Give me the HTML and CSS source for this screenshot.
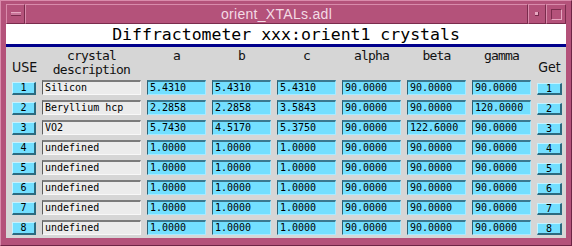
FILE: index.html
```
<!DOCTYPE html>
<html lang="en">
<head>
    <meta charset="UTF-8">
    <title>orient_XTALs.adl</title>
    <link rel="stylesheet" href="styles.css">
</head>
<body>

    <div class="frame">
        <!-- Window title bar -->
        <div class="titlebar">
            <div class="menu-btn"><span class="bar"></span></div>
            <div class="title">orient_XTALs.adl</div>
            <div class="min-btn"><span class="dot"></span></div>
            <div class="max-btn"><span class="square"></span></div>
        </div>

        <div class="screen">
            <div class="heading">Diffractometer xxx:orient1 crystals</div>

            <div class="panel">
                <!-- Column labels -->
                <div class="label side">USE</div>
                <div class="label">crystal<br>description</div>
                <div class="label">a</div>
                <div class="label">b</div>
                <div class="label">c</div>
                <div class="label">alpha</div>
                <div class="label">beta</div>
                <div class="label">gamma</div>
                <div class="label side">Get</div>

                <!-- Row 1 -->
                <button class="use">1</button>
                <div class="desc">Silicon</div>
                <div class="field">5.4310</div>
                <div class="field">5.4310</div>
                <div class="field">5.4310</div>
                <div class="field">90.0000</div>
                <div class="field">90.0000</div>
                <div class="field">90.0000</div>
                <button class="get">1</button>

                <!-- Row 2 -->
                <button class="use">2</button>
                <div class="desc">Beryllium hcp</div>
                <div class="field">2.2858</div>
                <div class="field">2.2858</div>
                <div class="field">3.5843</div>
                <div class="field">90.0000</div>
                <div class="field">90.0000</div>
                <div class="field">120.0000</div>
                <button class="get">2</button>

                <!-- Row 3 -->
                <button class="use">3</button>
                <div class="desc">VO2</div>
                <div class="field">5.7430</div>
                <div class="field">4.5170</div>
                <div class="field">5.3750</div>
                <div class="field">90.0000</div>
                <div class="field">122.6000</div>
                <div class="field">90.0000</div>
                <button class="get">3</button>

                <!-- Row 4 -->
                <button class="use">4</button>
                <div class="desc">undefined</div>
                <div class="field">1.0000</div>
                <div class="field">1.0000</div>
                <div class="field">1.0000</div>
                <div class="field">90.0000</div>
                <div class="field">90.0000</div>
                <div class="field">90.0000</div>
                <button class="get">4</button>

                <!-- Row 5 -->
                <button class="use">5</button>
                <div class="desc">undefined</div>
                <div class="field">1.0000</div>
                <div class="field">1.0000</div>
                <div class="field">1.0000</div>
                <div class="field">90.0000</div>
                <div class="field">90.0000</div>
                <div class="field">90.0000</div>
                <button class="get">5</button>

                <!-- Row 6 -->
                <button class="use">6</button>
                <div class="desc">undefined</div>
                <div class="field">1.0000</div>
                <div class="field">1.0000</div>
                <div class="field">1.0000</div>
                <div class="field">90.0000</div>
                <div class="field">90.0000</div>
                <div class="field">90.0000</div>
                <button class="get">6</button>

                <!-- Row 7 -->
                <button class="use">7</button>
                <div class="desc">undefined</div>
                <div class="field">1.0000</div>
                <div class="field">1.0000</div>
                <div class="field">1.0000</div>
                <div class="field">90.0000</div>
                <div class="field">90.0000</div>
                <div class="field">90.0000</div>
                <button class="get">7</button>

                <!-- Row 8 -->
                <button class="use">8</button>
                <div class="desc">undefined</div>
                <div class="field">1.0000</div>
                <div class="field">1.0000</div>
                <div class="field">1.0000</div>
                <div class="field">90.0000</div>
                <div class="field">90.0000</div>
                <div class="field">90.0000</div>
                <button class="get">8</button>
            </div>
        </div>
    </div>

</body>
</html>
```

FILE: styles.css
```
body {
    margin: 0;
    background-color: #b4527a;
    font-family: "DejaVu Sans Mono", monospace;
}

/* Window frame */
.frame {
    width: 572px;
    height: 246px;
    box-sizing: border-box;
    padding: 3px 5px 7px 5px;
    background-color: #b4527a;
    border-top: 1px solid #d98bab;
    border-left: 1px solid #d98bab;
    border-right: 1px solid #6e2445;
    border-bottom: 1px solid #6e2445;
}

.titlebar {
    display: flex;
    height: 20px;
}

.menu-btn,
.title,
.min-btn,
.max-btn {
    box-sizing: border-box;
    border-top: 1px solid #d98bab;
    border-left: 1px solid #d98bab;
    border-right: 1px solid #7a2c4d;
    border-bottom: 1px solid #7a2c4d;
    display: flex;
    align-items: center;
    justify-content: center;
}

.menu-btn {
    width: 19px;
}

.menu-btn .bar {
    width: 10px;
    height: 2px;
    background-color: #c9769a;
    border-top: 1px solid #e6a7c0;
    border-bottom: 1px solid #7a2c4d;
}

.title {
    flex: 1;
    color: #f3dbe5;
    font-family: "Liberation Sans", Arial, sans-serif;
    font-size: 14px;
    letter-spacing: 0.3px;
}

.min-btn {
    width: 18px;
}

.min-btn .dot {
    width: 3px;
    height: 3px;
    background-color: #e6a7c0;
    border-right: 1px solid #7a2c4d;
    border-bottom: 1px solid #7a2c4d;
}

.max-btn {
    width: 20px;
}

.max-btn .square {
    width: 9px;
    height: 9px;
    border-top: 1px solid #7a2c4d;
    border-left: 1px solid #7a2c4d;
    border-right: 1px solid #e6a7c0;
    border-bottom: 1px solid #e6a7c0;
}

/* Display area */
.screen {
    height: 214px;
    background-color: #d6d6d6;
    display: flex;
    flex-direction: column;
}

.heading {
    height: 20px;
    line-height: 21px;
    background-color: white;
    border-bottom: 3px solid #00008c;
    text-align: center;
    font-size: 16.5px;
    color: black;
}

.panel {
    display: grid;
    grid-template-columns: 24px 99px repeat(6, 59px) 25px;
    grid-template-rows: 28px repeat(8, 15px);
    column-gap: 6px;
    row-gap: 5px;
    padding: 0 5px 0 6px;
}

.label {
    text-align: center;
    font-size: 13px;
    letter-spacing: -0.8px;
    line-height: 14px;
    padding-top: 2px;
    color: #111;
}

.label.side {
    align-self: end;
    padding: 0 0 1px 0;
    font-family: "Liberation Sans Narrow", "DejaVu Sans Condensed", sans-serif;
    font-size: 14px;
    letter-spacing: 0;
}

.field,
.desc {
    box-sizing: border-box;
    height: 15px;
    line-height: 12px;
    padding-left: 2px;
    font-size: 10px;
    color: black;
    white-space: nowrap;
    overflow: hidden;
}

.field {
    background-color: #73dfff;
    border-top: 2px solid #3b7990;
    border-left: 1px solid #2e6072;
    border-right: 1px solid #a9eaff;
    border-bottom: 1px solid #a9eaff;
}

.desc {
    background-color: #ececec;
    border-top: 2px solid #7c7c7c;
    border-left: 1px solid #5e5e5e;
    border-right: 1px solid #f8f8f8;
    border-bottom: 1px solid #f8f8f8;
}

button {
    box-sizing: border-box;
    height: 13px;
    margin-top: 2px;
    padding: 0;
    font-family: "DejaVu Sans Mono", monospace;
    font-size: 10px;
    line-height: 10px;
    color: black;
    background-color: #73dfff;
    border-top: 1px solid #c4f3ff;
    border-left: 1px solid #c4f3ff;
    border-right: 2px solid #2b6a80;
    border-bottom: 2px solid #2b6a80;
    border-radius: 0;
}

.get {
    height: 12px;
    margin-top: 3px;
}
```
